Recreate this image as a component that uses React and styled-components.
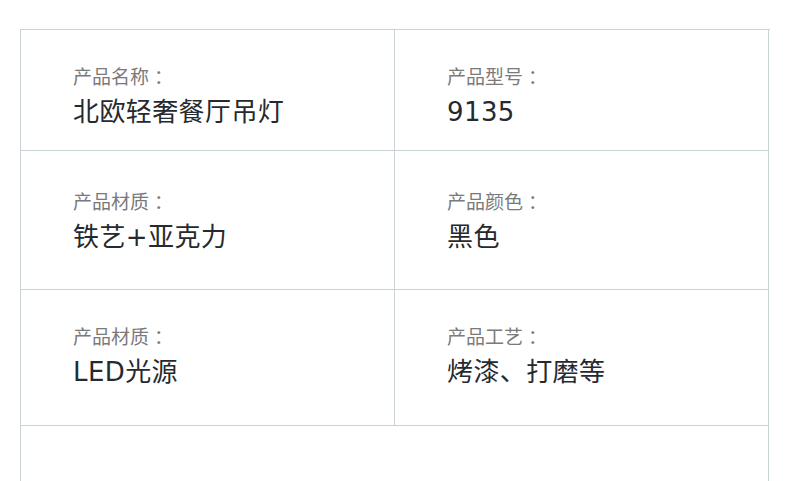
import styled, { createGlobalStyle } from "styled-components";

const GlobalStyle = createGlobalStyle`
    body {
        margin: 0;
        background: #fff;
        font-family: "DejaVu Sans", "Noto Sans CJK SC", sans-serif;
    }
`;

const Page = styled.div`
    padding: 29px 0 0 20px;
    height: 481px;
    box-sizing: border-box;
    overflow: hidden;
`;

const Table = styled.div`
    display: grid;
    grid-template-columns: 374px 374px;
    grid-template-rows: 121px 139px 136px 100px;
    width: 749px;
    border-top: 1px solid #c9d3d5;
    border-left: 1px solid #c9d3d5;
`;

const Cell = styled.div`
    box-sizing: border-box;
    grid-column: ${(p) => (p.$wide ? "1 / -1" : "auto")};
    border-right: 1px solid #c9d3d5;
    border-bottom: 1px solid #c9d3d5;
    padding: ${(p) => p.$top}px 0 0 52px;
    display: flex;
    flex-direction: column;
    gap: 6px;
`;

const Label = styled.div`
    font-family: "Noto Sans CJK SC", sans-serif;
    font-size: 19px;
    line-height: 26px;
    color: #7a7a7a;
`;

const Colon = styled.span`
    padding-left: 5px;
`;

const Value = styled.div`
    font-size: 26px;
    line-height: 34px;
    letter-spacing: 0.4px;
    color: #262a2e;
`;

const rows = [
    { top: 33, cells: [["产品名称", "北欧轻奢餐厅吊灯"], ["产品型号", "9135"]] },
    { top: 37, cells: [["产品材质", "铁艺+亚克力"], ["产品颜色", "黑色"]] },
    { top: 33, cells: [["产品材质", "LED光源"], ["产品工艺", "烤漆、打磨等"]] },
];

export default function App() {
    return (
        <Page>
            <GlobalStyle />
            <Table>
                {rows.map((row) =>
                    row.cells.map(([label, value]) => (
                        <Cell key={label + value} $top={row.top}>
                            <Label>
                                {label}
                                <Colon>：</Colon>
                            </Label>
                            <Value>{value}</Value>
                        </Cell>
                    ))
                )}
                <Cell $top={0} $wide />
            </Table>
        </Page>
    );
}
